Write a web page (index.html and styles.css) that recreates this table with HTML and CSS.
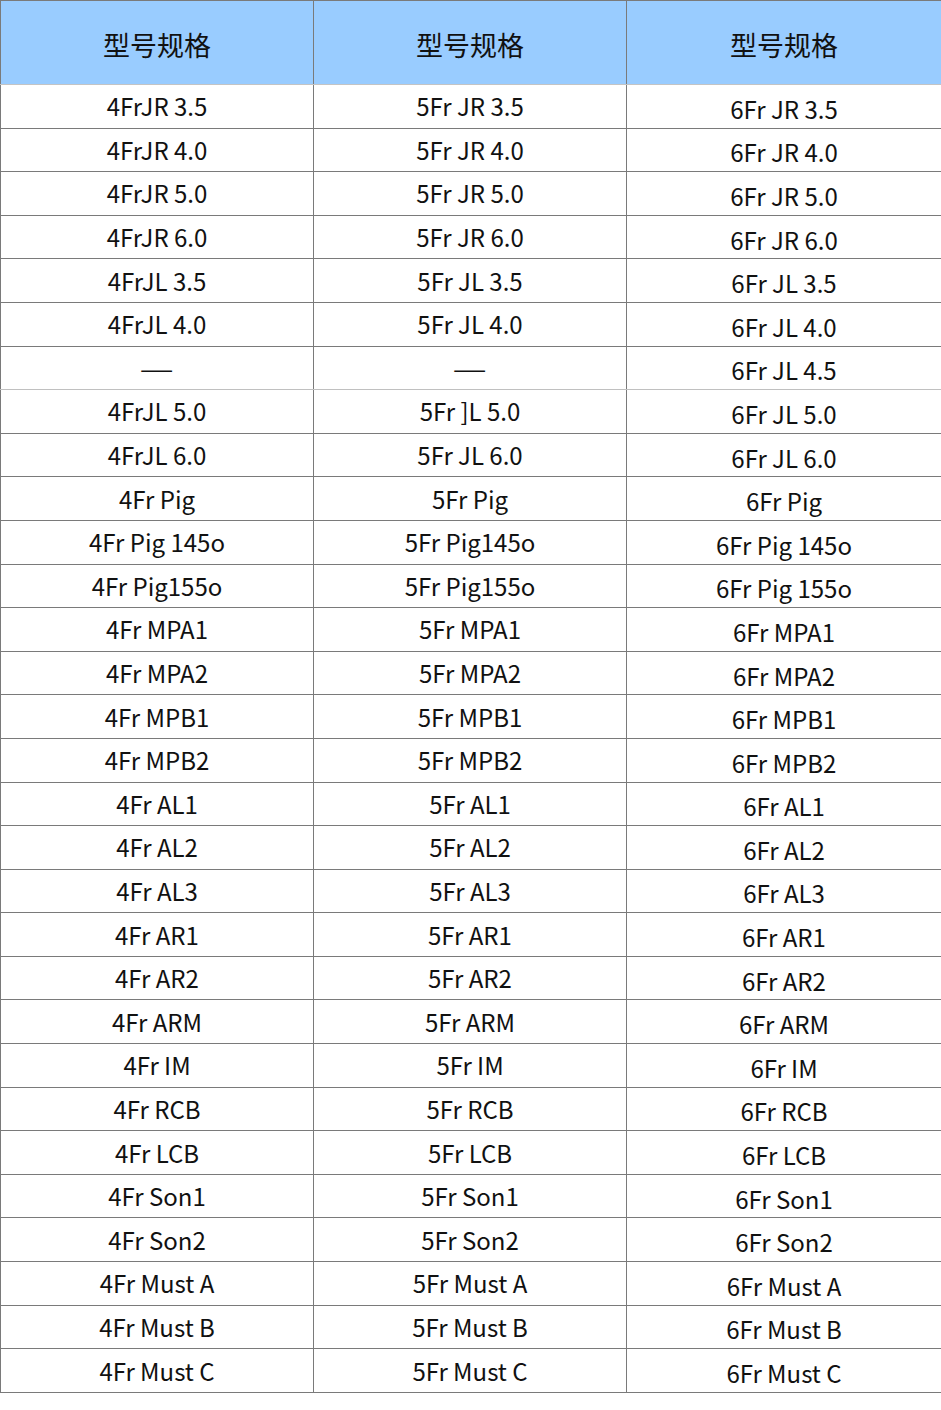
FILE: index.html
```html
<!DOCTYPE html>
<html lang="zh">
<head>
<meta charset="utf-8">
<title>型号规格</title>
<link rel="stylesheet" href="styles.css">
</head>
<body>
<table class="spec">
  <colgroup><col class="c1"><col class="c2"><col class="c3"></colgroup>
  <thead>
    <tr><th>型号规格</th><th>型号规格</th><th>型号规格</th></tr>
  </thead>
  <tbody>
    <tr><td>4FrJR 3.5</td><td>5Fr JR 3.5</td><td>6Fr JR 3.5</td></tr>
    <tr><td>4FrJR 4.0</td><td>5Fr JR 4.0</td><td>6Fr JR 4.0</td></tr>
    <tr><td>4FrJR 5.0</td><td>5Fr JR 5.0</td><td>6Fr JR 5.0</td></tr>
    <tr><td>4FrJR 6.0</td><td>5Fr JR 6.0</td><td>6Fr JR 6.0</td></tr>
    <tr><td>4FrJL 3.5</td><td>5Fr JL 3.5</td><td>6Fr JL 3.5</td></tr>
    <tr><td>4FrJL 4.0</td><td>5Fr JL 4.0</td><td>6Fr JL 4.0</td></tr>
    <tr class="light"><td><span class="dash">—</span></td><td><span class="dash">—</span></td><td>6Fr JL 4.5</td></tr>
    <tr><td>4FrJL 5.0</td><td>5Fr ]L 5.0</td><td>6Fr JL 5.0</td></tr>
    <tr><td>4FrJL 6.0</td><td>5Fr JL 6.0</td><td>6Fr JL 6.0</td></tr>
    <tr><td>4Fr Pig</td><td>5Fr Pig</td><td>6Fr Pig</td></tr>
    <tr><td>4Fr Pig 145o</td><td>5Fr Pig145o</td><td>6Fr Pig 145o</td></tr>
    <tr><td>4Fr Pig155o</td><td>5Fr Pig155o</td><td>6Fr Pig 155o</td></tr>
    <tr><td>4Fr MPA1</td><td>5Fr MPA1</td><td>6Fr MPA1</td></tr>
    <tr><td>4Fr MPA2</td><td>5Fr MPA2</td><td>6Fr MPA2</td></tr>
    <tr><td>4Fr MPB1</td><td>5Fr MPB1</td><td>6Fr MPB1</td></tr>
    <tr><td>4Fr MPB2</td><td>5Fr MPB2</td><td>6Fr MPB2</td></tr>
    <tr><td>4Fr AL1</td><td>5Fr AL1</td><td>6Fr AL1</td></tr>
    <tr><td>4Fr AL2</td><td>5Fr AL2</td><td>6Fr AL2</td></tr>
    <tr><td>4Fr AL3</td><td>5Fr AL3</td><td>6Fr AL3</td></tr>
    <tr><td>4Fr AR1</td><td>5Fr AR1</td><td>6Fr AR1</td></tr>
    <tr><td>4Fr AR2</td><td>5Fr AR2</td><td>6Fr AR2</td></tr>
    <tr><td>4Fr ARM</td><td>5Fr ARM</td><td>6Fr ARM</td></tr>
    <tr><td>4Fr IM</td><td>5Fr IM</td><td>6Fr IM</td></tr>
    <tr><td>4Fr RCB</td><td>5Fr RCB</td><td>6Fr RCB</td></tr>
    <tr><td>4Fr LCB</td><td>5Fr LCB</td><td>6Fr LCB</td></tr>
    <tr><td>4Fr Son1</td><td>5Fr Son1</td><td>6Fr Son1</td></tr>
    <tr><td>4Fr Son2</td><td>5Fr Son2</td><td>6Fr Son2</td></tr>
    <tr><td>4Fr Must A</td><td>5Fr Must A</td><td>6Fr Must A</td></tr>
    <tr><td>4Fr Must B</td><td>5Fr Must B</td><td>6Fr Must B</td></tr>
    <tr><td>4Fr Must C</td><td>5Fr Must C</td><td>6Fr Must C</td></tr>
  </tbody>
</table>
</body>
</html>
```
FILE: styles.css
```css
html, body {
  margin: 0;
  padding: 0;
  background: #ffffff;
}

body {
  font-family: "Noto Sans CJK SC", "Noto Sans", sans-serif;
  color: #111111;
}

.spec {
  width: 941px;
  border-collapse: collapse;
  table-layout: fixed;
}

.spec .c1 { width: 313px; }
.spec .c2 { width: 313px; }
.spec .c3 { width: 315px; }

.spec th,
.spec td {
  border: 1px solid #7a7a7a;
  text-align: center;
  padding: 0;
}

.spec th {
  background: #99ccff;
  height: 78px;
  font-size: 27px;
  font-weight: 400;
  line-height: 36px;
  border-bottom-color: #c4c4c4;
  padding-top: 5px;
}

.spec td {
  height: 42.6px;
  font-size: 24px;
  line-height: 30px;
}

.spec td:nth-child(3) {
  padding-top: 5px;
  height: 37.6px;
}

.spec tr.light td {
  border-bottom-color: #c0c0c0;
}

.dash {
  display: inline-block;
  transform: scaleX(1.6);
}
```
